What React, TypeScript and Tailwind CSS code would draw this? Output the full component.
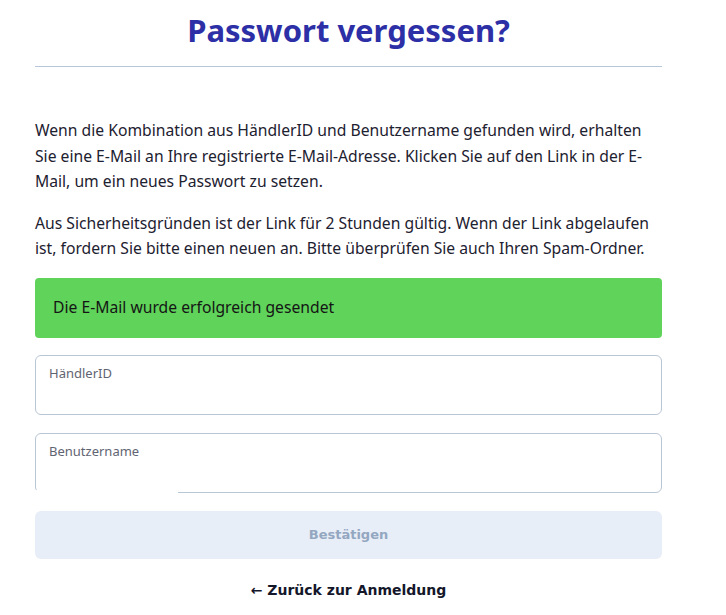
import React from "react";

const BODY = { fontFamily: "'Noto Sans', 'Open Sans', sans-serif" };
const WIDE = { fontFamily: "'DejaVu Sans', Verdana, sans-serif" };

function Field({ label, cover }: { label: string; cover?: boolean }) {
  return (
    <div className="relative">
      <label className="flex h-[60px] flex-col rounded-md border border-[#b9c6d6] bg-white px-[13px] pt-[8px]">
        <span className="text-[13px] leading-[18px] text-[#5f6472]">{label}</span>
        <input className="mt-1 w-full bg-transparent text-[15px] outline-none" />
      </label>
      {/* white patch over the lower border, as in the capture */}
      {cover && <div className="absolute bottom-0 left-0 h-[3px] w-[143px] bg-white" />}
    </div>
  );
}

export default function App() {
  return (
    <div className="min-h-[615px] bg-white" style={BODY}>
      <div className="ml-[35px] w-[627px]">
        <h1 className="pt-[10px] text-center text-[31px] font-bold leading-[40px] text-[#2d2fa6]">
          Passwort vergessen?
        </h1>
        <div className="mt-[16px] h-px bg-[#b8c6d9]" />

        <div className="mt-[51px] text-[15.7px] leading-[25.5px] text-[#1d2130]">
          <p>
            Wenn die Kombination aus HändlerID und Benutzername gefunden wird, erhalten Sie eine
            E-Mail an Ihre registrierte E-Mail-Adresse. Klicken Sie auf den Link in der E-Mail, um
            ein neues Passwort zu setzen.
          </p>
          <p className="mt-[16px]">
            Aus Sicherheitsgründen ist der Link für 2 Stunden gültig. Wenn der Link abgelaufen ist,
            fordern Sie bitte einen neuen an. Bitte überprüfen Sie auch Ihren Spam-Ordner.
          </p>
        </div>

        <div className="mt-[16px] flex h-[60px] items-center rounded-[4px] bg-[#5fd35a] px-[18px] text-[15.7px] text-[#151515]">
          Die E-Mail wurde erfolgreich gesendet
        </div>

        <div className="mt-[17px] flex flex-col gap-[18px]">
          <Field label="HändlerID" />
          <Field label="Benutzername" cover />
          <button className="h-[48px] rounded-md bg-[#e8eef7] text-[13px] font-bold text-[#93a7c1]" style={WIDE}>
            Bestätigen
          </button>
        </div>

        <div className="mt-[21px] flex justify-center">
          <a href="#" className="text-[14px] font-bold leading-[20px] text-[#14162a]" style={WIDE}>
            ← Zurück zur Anmeldung
          </a>
        </div>
      </div>
    </div>
  );
}
